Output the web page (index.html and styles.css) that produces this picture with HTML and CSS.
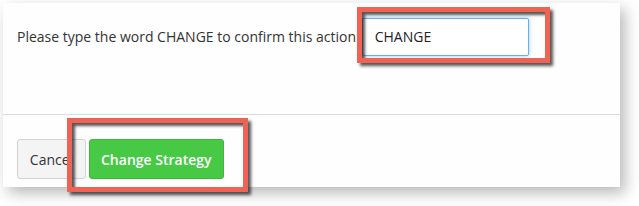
FILE: index.html
```html
<html lang="en">

<head>
    <meta charset="UTF-8">
    <meta name="viewport" content="width=device-width, initial-scale=1.0">
    <title>Change Strategy</title>
    <link rel="stylesheet" href="styles.css">
</head>

<body>
    <div class="modal">
        <div class="modal-body">
            <label for="confirm-word">Please type the word CHANGE to confirm this action:</label>
            <input id="confirm-word" class="in" type="text" value="CHANGE">
            <div class="mark mark-input"></div>
        </div>
        <div class="modal-footer">
            <button class="btn btn-default" type="button">Cancel</button>
            <button class="btn btn-success" type="submit">Change Strategy</button>
            <div class="mark mark-button"></div>
        </div>
    </div>
</body>

</html>
```

FILE: styles.css
```css
body {
    margin: 0;
    background: #ffffff;
    font-family: 'Open Sans', sans-serif;
}

.modal {
    width: 617px;
    height: 184px;
    margin: 3px 0 0 3px;
    background-color: #fefefe;
    box-shadow: 5px 6px 14px rgba(0, 0, 0, 0.28);
}

.modal-body {
    position: relative;
    display: flex;
    align-items: center;
    height: 112px;
    padding: 0 14px;
    box-sizing: border-box;
    border-bottom: 1px solid #dcdcdc;
}

.modal-body label {
    font-size: 14px;
    color: #333333;
    white-space: nowrap;
    padding-bottom: 44px;
}

.modal-body input {
    width: 167px;
    height: 38px;
    margin: 0 0 44px 2px;
    padding: 0 12px;
    box-sizing: border-box;
    border: 1px solid #66afe9;
    border-radius: 2px;
    box-shadow: 0 0 4px rgba(102, 175, 233, 0.6);
    font-family: 'Open Sans', sans-serif;
    font-size: 14px;
    color: #222222;
    background: #ffffff;
}

.modal-body input:focus {
    outline: 0;
}

.modal-footer {
    position: relative;
    display: flex;
    gap: 3px;
    padding: 24px 14px 0 14px;
}

.btn {
    height: 40px;
    padding: 0 11px;
    border-radius: 3px;
    font-family: 'Open Sans', sans-serif;
    font-size: 14px;
    white-space: nowrap;
}

.btn-default {
    width: 69px;
    color: #333333;
    background-color: #f4f4f4;
    border: 1px solid #d2d2d2;
}

.btn-success {
    min-width: 134px;
    color: #ffffff;
    font-weight: 600;
    background-color: #47c946;
    border: 1px solid #3cb83b;
}

.mark {
    position: absolute;
    box-sizing: border-box;
    border: 5px solid #ee6354;
    box-shadow: 3px 3px 3px rgba(30, 30, 30, 0.75), inset 3px 3px 3px rgba(30, 30, 30, 0.75);
}

.mark-input {
    left: 354px;
    top: 4px;
    width: 193px;
    height: 56px;
}

.mark-button {
    left: 64px;
    top: 3px;
    width: 181px;
    height: 74px;
}
```
